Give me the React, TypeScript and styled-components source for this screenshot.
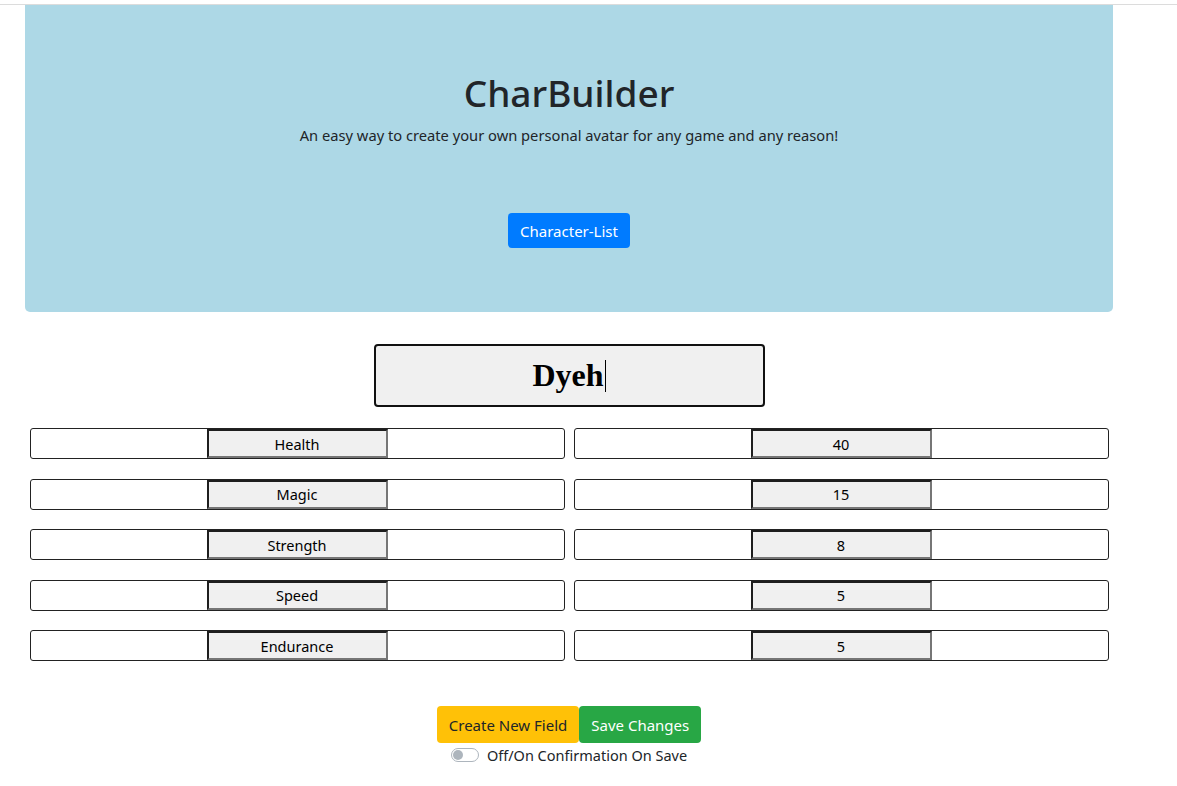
import React from "react";
import styled, { createGlobalStyle } from "styled-components";

const Global = createGlobalStyle`
  html, body { margin: 0; padding: 0; background: #fff; }
  body { font-family: "Noto Sans", "Open Sans", sans-serif; color: #212529; }
`;

const Page = styled.div`
  width: 1177px;
  min-height: 786px;
  border-top: 1px solid #dcdcdc;
  margin-top: 4px;
  box-sizing: border-box;
`;

const Jumbotron = styled.header`
  margin: 0 0 0 25px;
  width: 1088px;
  box-sizing: border-box;
  background: #add8e6;
  border-radius: 0 0 5px 5px;
  padding: 64px 32px 64px;
  display: flex;
  flex-direction: column;
  align-items: center;
`;

const Title = styled.h1`
  margin: 0 0 6px;
  font-size: 37px;
  font-weight: 500;
  line-height: 48px;
  color: #212529;
`;

const Lead = styled.p`
  margin: 0 0 66px;
  font-size: 14.7px;
  line-height: 24px;
`;

const Button = styled.button<{ $bg: string; $fg: string; $pad?: string }>`
  font-family: inherit;
  font-size: 15px;
  line-height: 24px;
  padding: ${(p) => p.$pad ?? "6px 12px 5px"};
  border: none;
  border-radius: 4px;
  background: ${(p) => p.$bg};
  color: ${(p) => p.$fg};
  cursor: pointer;
`;

const Main = styled.main`
  width: 1088px;
  margin-left: 25px;
  padding-top: 32px;
  display: flex;
  flex-direction: column;
  align-items: center;
`;

const NameBox = styled.div`
  width: 391px;
  height: 63px;
  box-sizing: border-box;
  background: #f0f0f0;
  border: 2px solid #111;
  border-radius: 4px;
  display: flex;
  align-items: center;
  justify-content: center;
  font-family: "Liberation Serif", serif;
  font-weight: bold;
  font-size: 32px;
  color: #000;
`;

const Caret = styled.span`
  display: inline-block;
  width: 1px;
  height: 32px;
  background: #000;
  margin-left: 1px;
`;

const Grid = styled.div`
  margin-top: 21px;
  width: 1079px;
  display: grid;
  grid-template-columns: 535px 535px;
  column-gap: 9px;
  row-gap: 19.5px;
`;

const Cell = styled.div`
  height: 31px;
  box-sizing: border-box;
  border: 1px solid #222;
  border-radius: 3px;
  display: flex;
  justify-content: center;
`;

const Field = styled.div`
  width: 181px;
  height: 29px;
  box-sizing: border-box;
  background: #f0f0f0;
  border-style: solid;
  border-width: 2px;
  border-color: #1e1e1e #767676 #767676 #1e1e1e;
  display: flex;
  align-items: center;
  justify-content: center;
  font-size: 14.5px;
  color: #000;
`;

const Actions = styled.div`
  margin-top: 45px;
  display: flex;
`;

const ToggleRow = styled.label`
  margin-top: 2px;
  display: flex;
  align-items: center;
  gap: 8px;
  font-size: 14.5px;
  color: #212529;
`;

const Switch = styled.span`
  position: relative;
  width: 28px;
  height: 14px;
  box-sizing: border-box;
  border: 1px solid #adb5bd;
  border-radius: 8px;
  background: #fff;
  &::after {
    content: "";
    position: absolute;
    left: 1px;
    top: 1px;
    width: 10px;
    height: 10px;
    border-radius: 50%;
    background: #adb5bd;
  }
`;

const stats: [string, string][] = [
  ["Health", "40"],
  ["Magic", "15"],
  ["Strength", "8"],
  ["Speed", "5"],
  ["Endurance", "5"],
];

export default function App() {
  return (
    <>
      <Global />
      <Page>
        <Jumbotron>
          <Title>CharBuilder</Title>
          <Lead>An easy way to create your own personal avatar for any game and any reason!</Lead>
          <Button $bg="#007bff" $fg="#fff">Character-List</Button>
        </Jumbotron>
        <Main>
          <NameBox>
            Dyeh<Caret />
          </NameBox>
          <Grid>
            {stats.map(([k, v]) => (
              <React.Fragment key={k}>
                <Cell>
                  <Field>{k}</Field>
                </Cell>
                <Cell>
                  <Field>{v}</Field>
                </Cell>
              </React.Fragment>
            ))}
          </Grid>
          <Actions>
            <Button $bg="#ffc107" $fg="#212529" $pad="7px 12px 6px">Create New Field</Button>
            <Button $bg="#28a745" $fg="#fff" $pad="7px 12px 6px">Save Changes</Button>
          </Actions>
          <ToggleRow>
            <Switch />
            Off/On Confirmation On Save
          </ToggleRow>
        </Main>
      </Page>
    </>
  );
}
